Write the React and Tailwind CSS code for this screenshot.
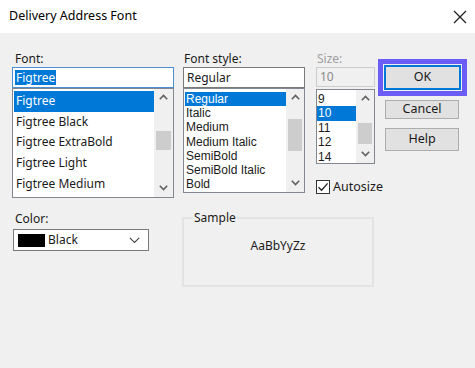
import React from "react";

const Up = () => (
  <svg width="9" height="6" viewBox="0 0 9 6"><path d="M0.8 5.2 L4.5 1.5 L8.2 5.2" fill="none" stroke="#606060" strokeWidth="1.6" /></svg>
);
const Down = () => (
  <svg width="9" height="6" viewBox="0 0 9 6"><path d="M0.8 0.8 L4.5 4.5 L8.2 0.8" fill="none" stroke="#606060" strokeWidth="1.6" /></svg>
);

function Scroll({ thumbTop, thumbH, w = 19 }) {
  return (
    <div className="relative h-full bg-[#f0f0f0] shrink-0" style={{ width: w }}>
      <div className="absolute top-[5px] left-0 right-0 flex justify-center"><Up /></div>
      <div className="absolute left-[2px] right-[2px] bg-[#cdcdcd]" style={{ top: thumbTop, height: thumbH }} />
      <div className="absolute bottom-[6px] left-0 right-0 flex justify-center"><Down /></div>
    </div>
  );
}

const narrow = { fontFamily: '"Liberation Sans", Arial, sans-serif' };

export default function App() {
  const font = { fontFamily: '"Noto Sans", "Open Sans", sans-serif' };
  return (
    <div className="w-[475px] h-[368px] bg-[#f0f0f0] flex flex-col text-[#1a1a1a] overflow-hidden" style={font}>
      <div className="h-[33px] bg-white flex items-center justify-between pl-[9px] pr-[8px] shrink-0">
        <span className="text-[12.5px] text-black">Delivery Address Font</span>
        <svg width="14" height="14" viewBox="0 0 14 14"><path d="M1 1 L13 13 M13 1 L1 13" stroke="#222" strokeWidth="1.3" /></svg>
      </div>
      <div className="flex items-start pt-[18px] pl-[12px]">
        {/* Font column */}
        <div className="w-[162px] flex flex-col">
          <div className="h-[16px] leading-[16px] text-[12px] pl-[3px]">Font:</div>
          <div className="h-[21px] border border-[#4d8fd1] bg-white flex items-center pl-[2px]">
            <span className="bg-[#0078d7] text-white text-[12px] leading-[15px] px-[1px]">Figtree</span>
          </div>
          <div className="h-[110px] border border-[#828790] bg-white flex">
            <div className="flex-1 flex flex-col pl-[1px] pt-[2px] text-[12px]">
              {["Figtree", "Figtree Black", "Figtree ExtraBold", "Figtree Light", "Figtree Medium"].map((t, i) => (
                <div key={t} className={`h-[20.7px] leading-[20.7px] pl-[2px] ${i === 0 ? "bg-[#0078d7] text-white" : ""}`}>{t}</div>
              ))}
            </div>
            <Scroll thumbTop={42} thumbH={19} />
          </div>
        </div>
        {/* Font style column */}
        <div className="w-[122px] ml-[9px] flex flex-col">
          <div className="h-[16px] leading-[16px] text-[12px] pl-[1px]">Font style:</div>
          <div className="h-[21px] border border-[#7a7a7a] bg-white flex items-center pl-[3px] text-[12px]">Regular</div>
          <div className="h-[105px] border border-[#828790] bg-white flex">
            <div className="flex-1 flex flex-col pl-[1px] pt-[3px] text-[12px]" style={narrow}>
              {["Regular", "Italic", "Medium", "Medium Italic", "SemiBold", "SemiBold Italic", "Bold"].map((t, i) => (
                <div key={t} className={`h-[14.2px] leading-[14.2px] pl-[1px] ${i === 0 ? "bg-[#0078d7] text-white" : ""}`}>{t}</div>
              ))}
            </div>
            <Scroll thumbTop={30} thumbH={32} w={18} />
          </div>
        </div>
        {/* Size column */}
        <div className="w-[59px] ml-[11px] flex flex-col">
          <div className="h-[16px] leading-[16px] text-[12px] text-[#a0a0a0] pl-[1px]">Size:</div>
          <div className="h-[20px] border border-[#cccccc] bg-[#f0f0f0] flex items-center pl-[3px] text-[12px] text-[#8a8a8a]">10</div>
          <div className="h-[75px] mt-[2px] border border-[#828790] bg-white flex">
            <div className="flex-1 flex flex-col pt-[2px] text-[12px]" style={narrow}>
              {["9", "10", "11", "12", "14"].map((t, i) => (
                <div key={t} className={`h-[14.4px] leading-[14.4px] pl-[1px] ${i === 1 ? "bg-[#0078d7] text-white" : ""}`}>{t}</div>
              ))}
            </div>
            <Scroll thumbTop={33} thumbH={21} w={18} />
          </div>
          <div className="flex items-center mt-[14px]">
            <div className="w-[14px] h-[14px] border border-[#333] bg-white flex items-center justify-center">
              <svg width="12" height="12" viewBox="0 0 12 12"><path d="M1.5 6.2 L4.6 9.3 L10.6 2.4" fill="none" stroke="#222" strokeWidth="1.3" /></svg>
            </div>
            <span className="ml-[3px] text-[12.5px]">Autosize</span>
          </div>
        </div>
        {/* Buttons */}
        <div className="ml-[3px] mt-[8px] flex flex-col w-[89px]">
          <div className="border-[5px] border-[#6b5cf6] p-[1px]">
            <div className="h-[25px] border-2 border-[#0078d7] bg-[#e1e1e1] flex items-center justify-center text-[12.5px]">OK</div>
          </div>
          <div className="ml-[7px] mr-[8px] mt-[4px] h-[19px] border border-[#adadad] bg-[#e1e1e1] flex items-center justify-center text-[12.5px]">Cancel</div>
          <div className="ml-[7px] mr-[8px] mt-[9px] h-[23px] border border-[#adadad] bg-[#e1e1e1] flex items-center justify-center text-[12.5px]">Help</div>
        </div>
      </div>
      {/* Lower row */}
      <div className="flex items-start pl-[13px] mt-[11px]">
        <div className="w-[136px] flex flex-col">
          <div className="h-[16px] leading-[16px] text-[12px] pl-[2px] mt-[2px]">Color:</div>
          <div className="h-[22px] mt-[2px] border border-[#7a7a7a] bg-white flex items-center pl-[4px] pr-[8px]">
            <div className="w-[27px] h-[13px] bg-black" />
            <span className="ml-[3px] text-[12px] flex-1">Black</span>
            <svg width="11" height="7" viewBox="0 0 11 7"><path d="M0.8 0.8 L5.5 5.5 L10.2 0.8" fill="none" stroke="#444" strokeWidth="1.1" /></svg>
          </div>
        </div>
        <div className="ml-[33px] w-[192px] h-[70px] mt-[8px] border-2 border-[#e3e3e3] relative flex items-center justify-center">
          <span className="absolute -top-[9px] left-[9px] bg-[#f0f0f0] px-[1px] text-[12px] leading-[16px]">Sample</span>
          <span className="text-[12px] -mt-[12px]">AaBbYyZz</span>
        </div>
      </div>
    </div>
  );
}
